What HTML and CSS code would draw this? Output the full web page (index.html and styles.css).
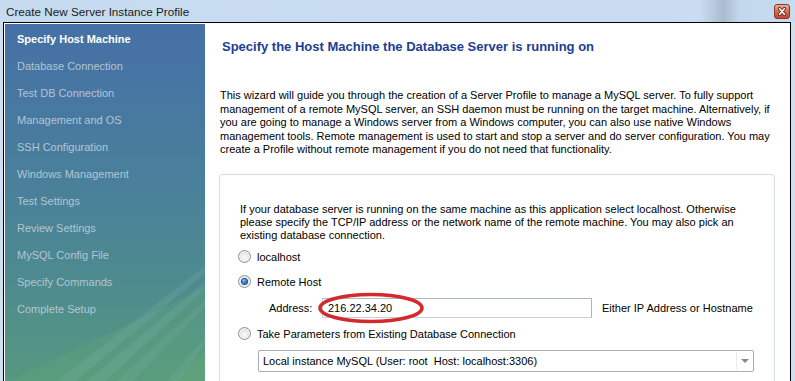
FILE: index.html
```html
<!DOCTYPE html>
<html lang="en">
<head>
  <meta charset="UTF-8">
  <title>Create New Server Instance Profile</title>
  <link rel="stylesheet" href="styles.css">
</head>
<body>
  <div class="titlebar">
    <span class="title">Create New Server Instance Profile</span>
    <span class="close">
      <svg width="16" height="15" viewBox="0 0 16 15">
        <defs>
          <linearGradient id="cg" x1="0" y1="0" x2="0" y2="1">
            <stop offset="0" stop-color="#eab4a2"/>
            <stop offset="0.5" stop-color="#d56a4f"/>
            <stop offset="1" stop-color="#c0472c"/>
          </linearGradient>
        </defs>
        <rect x="0.5" y="0.5" width="15" height="14" rx="2.5" fill="url(#cg)" stroke="#8a3a2a"/>
        <path d="M5.5 4.5 L10.5 10.5 M10.5 4.5 L5.5 10.5" stroke="#5a2418" stroke-width="3.2" stroke-linecap="round"/>
        <path d="M5.5 4.5 L10.5 10.5 M10.5 4.5 L5.5 10.5" stroke="#fff" stroke-width="1.6" stroke-linecap="round"/>
      </svg>
    </span>
  </div>

  <div class="dialog">
    <nav class="steps">
      <div class="step current">Specify Host Machine</div>
      <div class="step">Database Connection</div>
      <div class="step">Test DB Connection</div>
      <div class="step">Management and OS</div>
      <div class="step">SSH Configuration</div>
      <div class="step">Windows Management</div>
      <div class="step">Test Settings</div>
      <div class="step">Review Settings</div>
      <div class="step">MySQL Config File</div>
      <div class="step">Specify Commands</div>
      <div class="step">Complete Setup</div>
      <svg class="rays" width="200" height="357" viewBox="0 0 200 357">
        <polygon points="0,357 200,262 200,357" fill="#5fa878" opacity="0.3"/>
        <polygon points="50,357 200,240 200,247 68,357" fill="#8fc2b8" opacity="0.16"/>
        <polygon points="80,357 200,256 200,263 98,357" fill="#8fc2b8" opacity="0.16"/>
        <polygon points="110,357 200,274 200,281 126,357" fill="#8fc2b8" opacity="0.14"/>
        <polygon points="160,357 200,312 200,318 172,357" fill="#8fc2b8" opacity="0.14"/>
        <polygon points="165,357 200,325 200,357" fill="#66ad78" opacity="0.35"/>
      </svg>
    </nav>

    <main class="page">
      <h1>Specify the Host Machine the Database Server is running on</h1>
      <p class="intro">This wizard will guide you through the creation of a Server Profile to manage a MySQL server. To fully support<br>
management of a remote MySQL server, an SSH daemon must be running on the target machine. Alternatively, if<br>
you are going to manage a Windows server from a Windows computer, you can also use native Windows<br>
management tools. Remote management is used to start and stop a server and do server configuration. You may<br>
create a Profile without remote management if you do not need that functionality.</p>

      <section class="group">
        <p class="note">If your database server is running on the same machine as this application select localhost. Otherwise<br>
please specify the TCP/IP address or the network name of the remote machine. You may also pick an<br>
existing database connection.</p>

        <div class="option"><span class="radio"></span>localhost</div>
        <div class="option"><span class="radio checked"></span>Remote Host</div>
        <div class="address-row">
          <span class="label">Address:</span>
          <span class="field">
            216.22.34.20
            <svg class="mark" width="110" height="32" viewBox="0 0 110 32">
              <ellipse cx="55" cy="16" rx="51" ry="13.5" fill="none" stroke="#d32a2c" stroke-width="3.5"/>
            </svg>
          </span>
          <span class="hint">Either IP Address or Hostname</span>
        </div>
        <div class="option"><span class="radio"></span>Take Parameters from Existing Database Connection</div>
        <div class="select">
          <span class="value">Local instance MySQL (User: root&nbsp; Host: localhost:3306)</span>
          <span class="arrow"></span>
        </div>
      </section>
    </main>
  </div>
</body>
</html>
```

FILE: styles.css
```css
html, body {
  margin: 0;
  height: 100%;
  overflow: hidden;
}
body {
  background: #cfdff1;
  font-family: "Liberation Sans", Arial, sans-serif;
  font-size: 11px;
  color: #000;
}
.titlebar {
  height: 22px;
  display: flex;
  align-items: center;
  justify-content: space-between;
  padding: 0 5px 0 6px;
  background: linear-gradient(to right, #c6daf0 0%, #c9dcf1 88%, #a9bccf 91%, #c3d7ed 93%, #c8dbf0 100%);
}
.title {
  font-size: 11.7px;
  color: #1b1b1b;
  margin-top: 1px;
}
.close {
  display: flex;
  margin-top: 1px;
}
.dialog {
  display: flex;
  height: 359px;
  margin: 0 4px 0 3px;
  border: 1px solid #000;
  border-bottom: none;
  padding: 1px 0 0 1px;
  background: #fff;
}
.steps {
  position: relative;
  width: 200px;
  flex: none;
  padding-top: 2px;
  background: linear-gradient(to bottom, #4570a5 0%, #4777a2 20%, #4a8298 50%, #4e8b8e 72%, #57987f 100%);
  overflow: hidden;
}
.step {
  position: relative;
  z-index: 1;
  height: 27px;
  line-height: 27px;
  padding-left: 12px;
  color: #b3c5d2;
}
.step.current {
  color: #fff;
  font-weight: bold;
}
.rays {
  position: absolute;
  left: 0;
  bottom: 0;
}
.page {
  flex: 1;
  padding: 0 15px 0 15px;
}
h1 {
  margin: 15px 0 0 2px;
  font-size: 13px;
  line-height: 16px;
  color: #1c3e92;
}
.intro {
  margin: 34px 0 0 0;
  line-height: 13.5px;
  white-space: nowrap;
}
.group {
  margin: 17px 0 0 -1px;
  height: 220px;
  border: 1px solid #d8dee3;
  border-bottom: none;
  border-radius: 4px 4px 0 0;
  padding: 0 0 0 20px;
}
.note {
  margin: 28px 0 0 0;
  line-height: 13px;
  white-space: nowrap;
}
.option {
  display: flex;
  align-items: center;
  height: 24px;
  margin-top: 3px;
  margin-left: -2px;
}
.option + .option {
  margin-top: 1px;
}
.radio {
  width: 11px;
  height: 11px;
  margin-right: 6px;
  border: 1px solid #8f9090;
  border-radius: 50%;
  background: radial-gradient(circle at 50% 60%, #fafafa 0%, #e6e6e6 55%, #cfcfcf 100%);
  box-shadow: inset 0 0 0 1px #f4f4f4;
  display: flex;
  align-items: center;
  justify-content: center;
}
.radio.checked::after {
  content: "";
  width: 5px;
  height: 5px;
  border-radius: 50%;
  background: radial-gradient(circle at 40% 35%, #8fd0ff 0%, #2a7ad0 45%, #0d3f86 100%);
  box-shadow: 0 0 0 1px #1a4f8f;
}
.address-row {
  display: flex;
  align-items: center;
  height: 22px;
  margin-top: 3px;
  padding-left: 29px;
}
.label {
  width: 53px;
}
.field {
  position: relative;
  display: flex;
  align-items: center;
  box-sizing: border-box;
  width: 270px;
  height: 20px;
  padding-left: 5px;
  border: 1px solid #c5d2de;
  border-top-color: #abb8c6;
  border-right-color: #9fb8d2;
}
.mark {
  position: absolute;
  left: -7px;
  top: -7px;
}
.hint {
  margin-left: 10px;
}
.select {
  display: flex;
  align-items: center;
  box-sizing: border-box;
  width: 496px;
  height: 22px;
  margin: 4px 0 0 18px;
  border: 1px solid #acacac;
  border-radius: 2px;
}
.value {
  flex: 1;
  padding-left: 4px;
}
.arrow {
  width: 16px;
  height: 18px;
  border-left: 1px solid #ececec;
  position: relative;
}
.arrow::after {
  content: "";
  position: absolute;
  left: 4px;
  top: 7px;
  border-left: 4px solid transparent;
  border-right: 4px solid transparent;
  border-top: 4px solid #8a8a8a;
}
```
